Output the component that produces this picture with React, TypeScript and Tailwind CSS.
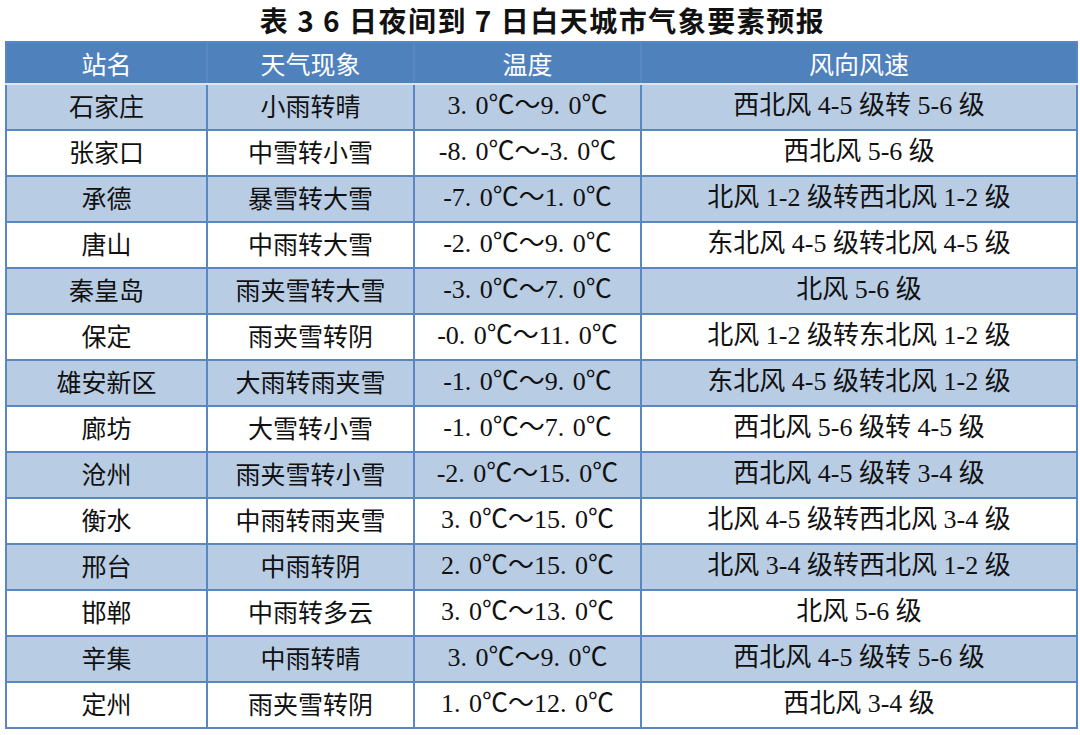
import React from 'react';

const rows = [
  ['石家庄', '小雨转晴', '3.0℃～9.0℃', '西北风 4-5 级转 5-6 级'],
  ['张家口', '中雪转小雪', '-8.0℃～-3.0℃', '西北风 5-6 级'],
  ['承德', '暴雪转大雪', '-7.0℃～1.0℃', '北风 1-2 级转西北风 1-2 级'],
  ['唐山', '中雨转大雪', '-2.0℃～9.0℃', '东北风 4-5 级转北风 4-5 级'],
  ['秦皇岛', '雨夹雪转大雪', '-3.0℃～7.0℃', '北风 5-6 级'],
  ['保定', '雨夹雪转阴', '-0.0℃～11.0℃', '北风 1-2 级转东北风 1-2 级'],
  ['雄安新区', '大雨转雨夹雪', '-1.0℃～9.0℃', '东北风 4-5 级转北风 1-2 级'],
  ['廊坊', '大雪转小雪', '-1.0℃～7.0℃', '西北风 5-6 级转 4-5 级'],
  ['沧州', '雨夹雪转小雪', '-2.0℃～15.0℃', '西北风 4-5 级转 3-4 级'],
  ['衡水', '中雨转雨夹雪', '3.0℃～15.0℃', '北风 4-5 级转西北风 3-4 级'],
  ['邢台', '中雨转阴', '2.0℃～15.0℃', '北风 3-4 级转西北风 1-2 级'],
  ['邯郸', '中雨转多云', '3.0℃～13.0℃', '北风 5-6 级'],
  ['辛集', '中雨转晴', '3.0℃～9.0℃', '西北风 4-5 级转 5-6 级'],
  ['定州', '雨夹雪转阴', '1.0℃～12.0℃', '西北风 3-4 级'],
];

// render "." a bit wider, like the Song typeface in the source
const Temp: React.FC<{ text: string }> = ({ text }) => (
  <>
    {text.split('.').map((part, i, arr) => (
      <React.Fragment key={i}>
        {part}
        {i < arr.length - 1 && <span className="inline-block w-[15px] text-left">.</span>}
      </React.Fragment>
    ))}
  </>
);

const App: React.FC = () => {
  return (
    <div className="w-[1080px] h-[735px] bg-white pl-[5px] pt-[3px] font-['Liberation_Serif','Noto_Sans_CJK_SC',serif] text-[#111]">
      <h1 className="text-center text-[28px] tracking-[1.5px] font-bold leading-[34px] h-[38px] font-['Noto_Sans_CJK_SC',sans-serif]">
        表 3 6 日夜间到 7 日白天城市气象要素预报
      </h1>
      <table className="border-collapse w-[1071px] table-fixed">
        <colgroup>
          <col className="w-[201px]" />
          <col className="w-[207px]" />
          <col className="w-[227px]" />
          <col className="w-[436px]" />
        </colgroup>
        <thead>
          <tr className="h-[42px] bg-[#4f81bd] text-white">
            {['站名', '天气现象', '温度', '风向风速'].map((h) => (
              <th
                key={h}
                className="border-2 border-[#5a87c2] border-b-[#dbe5f1] font-normal text-[25px] leading-none p-0 font-['Noto_Sans_CJK_SC',sans-serif]"
              >
                {h}
              </th>
            ))}
          </tr>
        </thead>
        <tbody>
          {rows.map((r, i) => (
            <tr key={i} className={`h-[46px] ${i % 2 === 0 ? 'bg-[#b8cce4]' : 'bg-white'}`}>
              <td className="border-2 border-[#5a87c2] text-center text-[25px] leading-none p-0 pb-[3px] font-['Noto_Sans_CJK_SC',sans-serif]">
                {r[0]}
              </td>
              <td className="border-2 border-[#5a87c2] text-center text-[25px] leading-none p-0 pb-[3px] font-['Noto_Sans_CJK_SC',sans-serif]">
                {r[1]}
              </td>
              <td className="border-2 border-[#5a87c2] text-center text-[26px] leading-none p-0 pb-[2px]">
                <Temp text={r[2]} />
              </td>
              <td className="border-2 border-[#5a87c2] text-center text-[26px] leading-none p-0 pb-[2px]">
                {r[3]}
              </td>
            </tr>
          ))}
        </tbody>
      </table>
    </div>
  );
};

export default App;
